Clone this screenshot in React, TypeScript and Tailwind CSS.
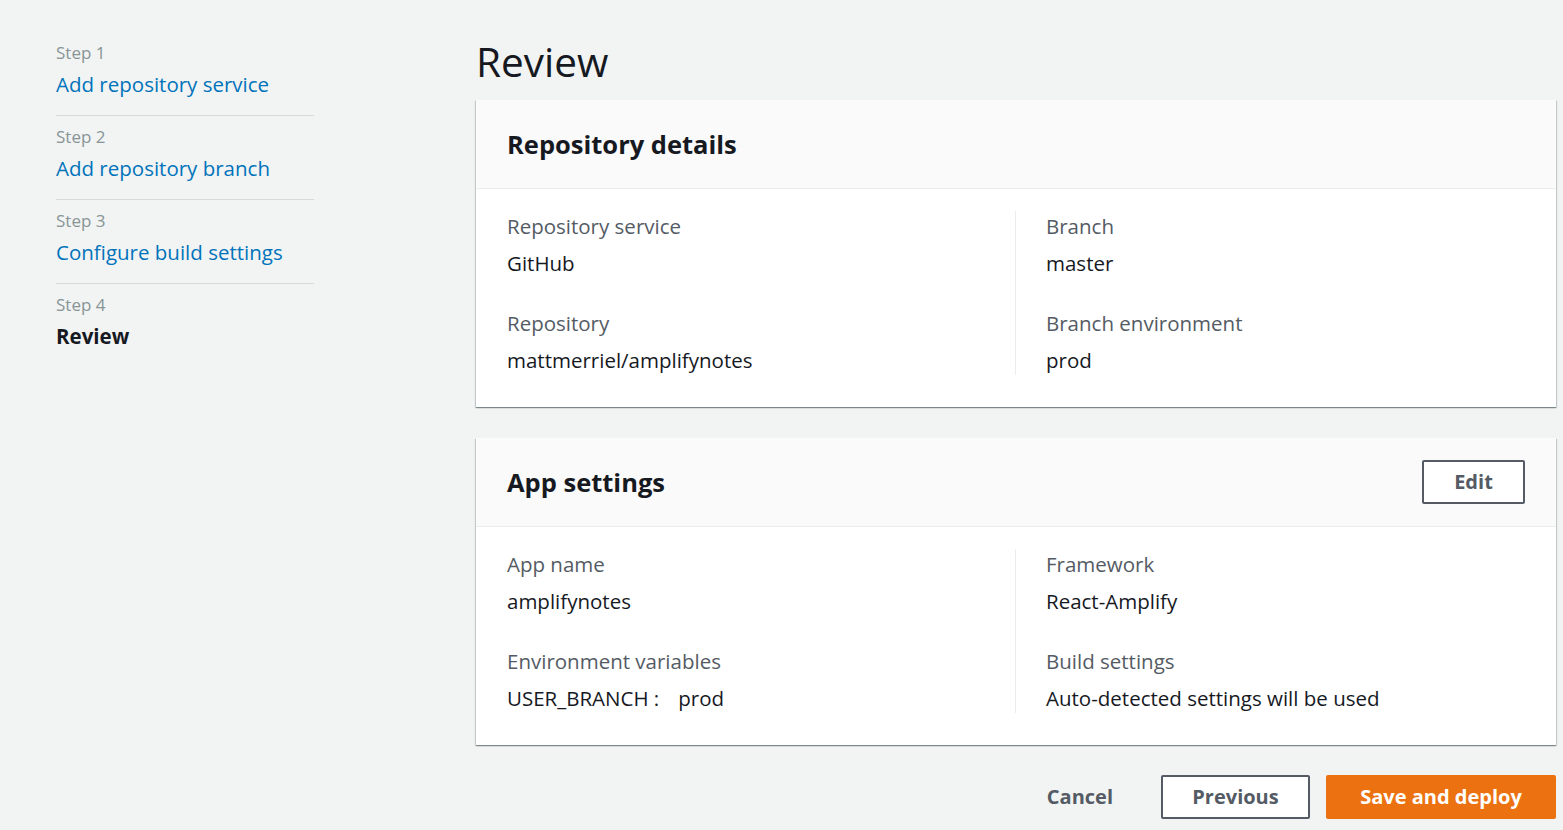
const font = { fontFamily: "'Open Sans', 'Noto Sans', sans-serif" };

const steps = [
  { n: "Step 1", label: "Add repository service", done: true },
  { n: "Step 2", label: "Add repository branch", done: true },
  { n: "Step 3", label: "Configure build settings", done: true },
  { n: "Step 4", label: "Review", done: false },
];

function Field({ label, value, first }: { label: string; value: React.ReactNode; first?: boolean }) {
  return (
    <div className={first ? "" : "mt-[30px]"}>
      <div className="text-[20.5px] leading-[30px] text-[#545b64]">{label}</div>
      <div className="mt-[7px] text-[20.5px] leading-[30px] text-[#16191f]">{value}</div>
    </div>
  );
}

function Card({ title, action, left, right }: { title: string; action?: React.ReactNode; left: React.ReactNode; right: React.ReactNode }) {
  return (
    <div className="bg-white shadow-[0_1px_1px_0_rgba(0,28,36,0.3),1px_1px_1px_0_rgba(0,28,36,0.15),-1px_1px_1px_0_rgba(0,28,36,0.15)]">
      <div className="flex h-[89px] items-center justify-between border-b border-[#eaeded] bg-[#fafafa] px-[31px]">
        <h2 className="text-[25.5px] font-bold text-[#16191f]">{title}</h2>
        {action}
      </div>
      <div className="flex px-[31px] pb-[32px] pt-[22px]">
        <div className="w-[508px] shrink-0">{left}</div>
        <div className="flex-1 border-l border-[#eaeded] pl-[30px]">{right}</div>
      </div>
    </div>
  );
}

export default function App() {
  return (
    <div className="flex min-h-screen bg-[#f2f3f3]" style={font}>
      {/* wizard steps */}
      <nav className="ml-[56px] w-[258px] shrink-0 pt-[41px]">
        {steps.map((s, i) => (
          <div key={s.n} className={i < steps.length - 1 ? "mb-[9px] border-b border-[#d5dbdb] pb-[16px]" : ""}>
            <div className="text-[17px] leading-[24px] text-[#879596]">{s.n}</div>
            <div
              className={
                "mt-[4px] text-[20.5px] leading-[30px] " +
                (s.done ? "text-[#0073bb]" : "font-bold text-[#16191f]")
              }
            >
              {s.label}
            </div>
          </div>
        ))}
      </nav>

      {/* main */}
      <main className="ml-[162px] flex-1 pr-[7px] pt-[36px]">
        <h1 className="mb-[12px] text-[40.5px] leading-[52px] text-[#16191f]">Review</h1>

        <Card
          title="Repository details"
          left={
            <>
              <Field first label="Repository service" value="GitHub" />
              <Field label="Repository" value="mattmerriel/amplifynotes" />
            </>
          }
          right={
            <>
              <Field first label="Branch" value="master" />
              <Field label="Branch environment" value="prod" />
            </>
          }
        />

        <div className="mt-[31px]">
          <Card
            title="App settings"
            action={
              <button className="h-[44px] w-[103px] rounded-[2px] border-2 border-[#545b64] bg-white text-[20px] font-bold text-[#545b64]">
                Edit
              </button>
            }
            left={
              <>
                <Field first label="App name" value="amplifynotes" />
                <Field
                  label="Environment variables"
                  value={
                    <span>
                      USER_BRANCH :<span className="ml-[19px]">prod</span>
                    </span>
                  }
                />
              </>
            }
            right={
              <>
                <Field first label="Framework" value="React-Amplify" />
                <Field label="Build settings" value="Auto-detected settings will be used" />
              </>
            }
          />
        </div>

        <div className="mt-[30px] flex items-center justify-end gap-[16px]">
          <button className="mr-[12px] h-[44px] px-[20px] text-[20px] font-bold text-[#545b64]">Cancel</button>
          <button className="h-[44px] w-[149px] rounded-[2px] border-2 border-[#545b64] bg-white text-[20px] font-bold text-[#545b64]">
            Previous
          </button>
          <button className="h-[44px] w-[230px] rounded-[2px] bg-[#ec7211] text-[20px] font-bold text-white">
            Save and deploy
          </button>
        </div>
      </main>
    </div>
  );
}
